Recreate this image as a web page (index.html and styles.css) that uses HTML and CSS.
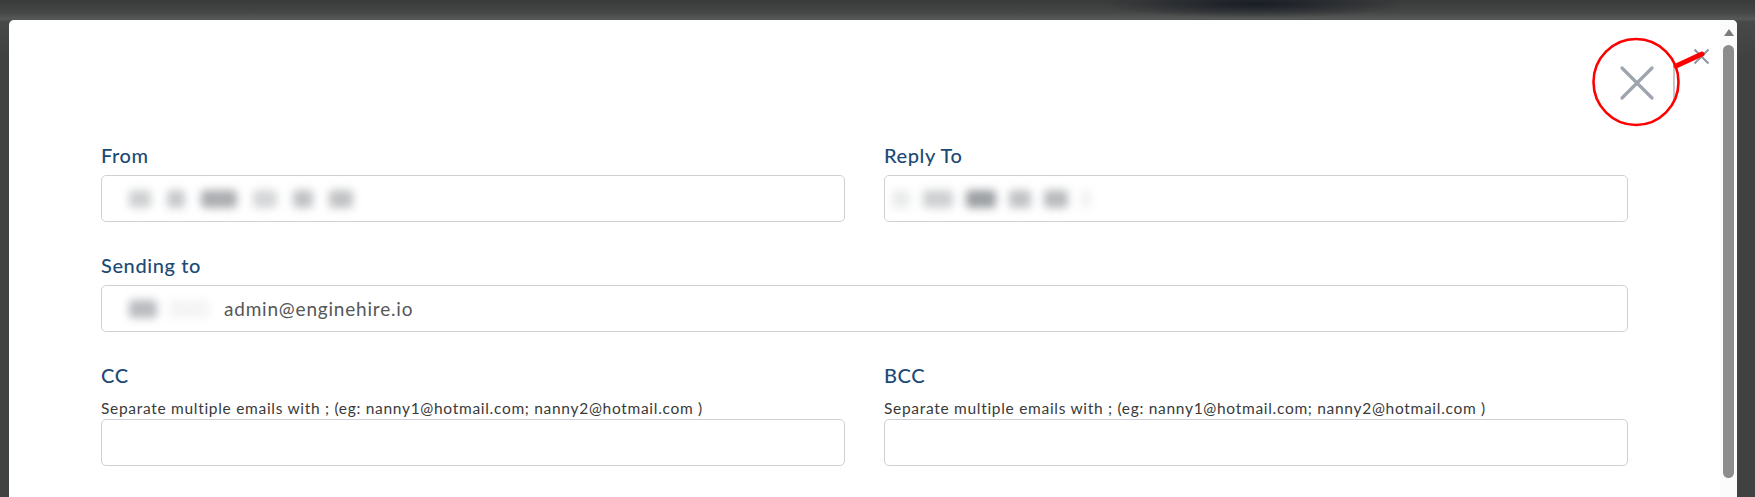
FILE: index.html
```html
<!DOCTYPE html>
<html lang="en">
<head>
<meta charset="utf-8">
<title>Email settings</title>
<link rel="stylesheet" href="styles.css">
</head>
<body>
<div class="backdrop">
  <div class="modal">
    <div class="modal-main">
      <div class="modal-header">
        <button class="close-btn" type="button" aria-label="Close">
          <svg viewBox="0 0 17 17" width="17" height="17"><path d="M1.5 1.5 L15.5 15.5 M15.5 1.5 L1.5 15.5" stroke="#8f96a0" stroke-width="2" fill="none"/></svg>
        </button>
      </div>
      <form class="form">
        <div class="field">
          <label class="label">From</label>
          <div class="input">
            <span class="blurs" aria-hidden="true">
              <span class="b" style="width:22px;opacity:.35"></span>
              <span class="b" style="width:18px;opacity:.4"></span>
              <span class="b" style="width:36px;opacity:.6"></span>
              <span class="b" style="width:24px;opacity:.3"></span>
              <span class="b" style="width:20px;opacity:.45"></span>
              <span class="b" style="width:24px;opacity:.45"></span>
            </span>
          </div>
        </div>
        <div class="field">
          <label class="label">Reply To</label>
          <div class="input">
            <span class="blurs reply" aria-hidden="true">
              <span class="b" style="width:18px;opacity:.15"></span>
              <span class="b" style="width:30px;opacity:.35"></span>
              <span class="b" style="width:30px;opacity:.7"></span>
              <span class="b" style="width:22px;opacity:.45"></span>
              <span class="b" style="width:24px;opacity:.5"></span>
              <span class="b" style="width:10px;opacity:.1"></span>
            </span>
          </div>
        </div>
        <div class="field wide">
          <label class="label">Sending to</label>
          <div class="input">
            <span class="blurs send" aria-hidden="true">
              <span class="b" style="width:28px;opacity:.5"></span>
              <span class="b" style="width:40px;opacity:.08"></span>
            </span>
            <span class="value">admin@enginehire.io</span>
          </div>
        </div>
        <div class="field">
          <label class="label">CC</label>
          <p class="hint">Separate multiple emails with ; (eg: nanny1@hotmail.com; nanny2@hotmail.com )</p>
          <div class="input"></div>
        </div>
        <div class="field">
          <label class="label">BCC</label>
          <p class="hint">Separate multiple emails with ; (eg: nanny1@hotmail.com; nanny2@hotmail.com )</p>
          <div class="input"></div>
        </div>
      </form>
    </div>
    <div class="scrollbar" aria-hidden="true">
      <div class="arrow-up"></div>
      <div class="thumb"></div>
    </div>
    <svg class="annotation" viewBox="0 0 140 110" width="140" height="110" aria-hidden="true">
      <line x1="94" y1="33" x2="94" y2="70" stroke="#c6c8cc" stroke-width="2"/>
      <path d="M42 38 L72 68 M72 38 L42 68" stroke="#9ea5ae" stroke-width="3.2" fill="none" stroke-linecap="round"/>
      <ellipse cx="56" cy="52" rx="42.5" ry="43" fill="none" stroke="#ff0000" stroke-width="2.6"/>
      <line x1="96" y1="36" x2="122" y2="24" stroke="#ff0000" stroke-width="5" stroke-linecap="round"/>
    </svg>
  </div>
</div>
</body>
</html>
```

FILE: styles.css
```css
html, body {
  margin: 0;
  padding: 0;
  height: 497px;
  overflow: hidden;
}

body {
  background: #424343;
  font-family: "Lato", "Liberation Sans", sans-serif;
}

.backdrop {
  height: 497px;
  box-sizing: border-box;
  padding: 20px 18px 0 9px;
  background:
    radial-gradient(ellipse 150px 14px at 1255px 4px, rgba(22, 27, 35, 0.95), rgba(22, 27, 35, 0) 100%),
    linear-gradient(to bottom, #393a3a 0, #444545 12px, #575858 19px, #474848 22px, #404141 60px);
}

.modal {
  position: relative;
  height: 477px;
  background: #ffffff;
  border-radius: 5px 5px 0 0;
  display: flex;
  overflow: hidden;
}

.modal-main {
  flex: 1;
  display: flex;
  flex-direction: column;
}

.modal-header {
  display: flex;
  justify-content: flex-end;
  padding: 28px 10px 0 0;
  height: 95px;
}

.close-btn {
  width: 17px;
  height: 17px;
  padding: 0;
  border: 0;
  background: none;
  display: flex;
}

.form {
  display: grid;
  grid-template-columns: 1fr 1fr;
  column-gap: 39px;
  row-gap: 31px;
  padding: 0 92px;
}

.field {
  display: flex;
  flex-direction: column;
}

.field.wide {
  grid-column: 1 / -1;
}

.label {
  font-size: 20px;
  line-height: 24px;
  font-weight: 500;
  letter-spacing: 0.6px;
  color: #1c4a77;
  margin-bottom: 8px;
}

.hint {
  margin: 3px 0 1px;
  font-size: 15.5px;
  line-height: 20px;
  font-weight: 400;
  letter-spacing: 0.7px;
  color: #3a3a3a;
}

.input {
  height: 47px;
  box-sizing: border-box;
  border: 1px solid #cfd1d6;
  border-radius: 5px;
  display: flex;
  align-items: center;
  padding-left: 27px;
  background: #fff;
}

.blurs {
  display: flex;
  align-items: center;
  gap: 16px;
  filter: blur(4.5px);
}

.blurs.reply {
  gap: 13px;
  margin-left: -20px;
}

.blurs.send {
  gap: 12px;
}

.blurs .b {
  display: block;
  height: 18px;
  border-radius: 4px;
  background: #74787d;
}

.value {
  margin-left: 15px;
  font-size: 19px;
  letter-spacing: 0.8px;
  color: #555759;
}

.scrollbar {
  width: 17px;
  background: #fbfbfb;
  display: flex;
  flex-direction: column;
  align-items: center;
  padding-top: 9px;
}

.arrow-up {
  width: 0;
  height: 0;
  border-left: 5px solid transparent;
  border-right: 5px solid transparent;
  border-bottom: 7px solid #7b7b7b;
}

.thumb {
  margin-top: 9px;
  width: 11px;
  height: 433px;
  border-radius: 6px;
  background: #8c8c8c;
}

.annotation {
  position: absolute;
  left: 1571px;
  top: 10px;
}
```
